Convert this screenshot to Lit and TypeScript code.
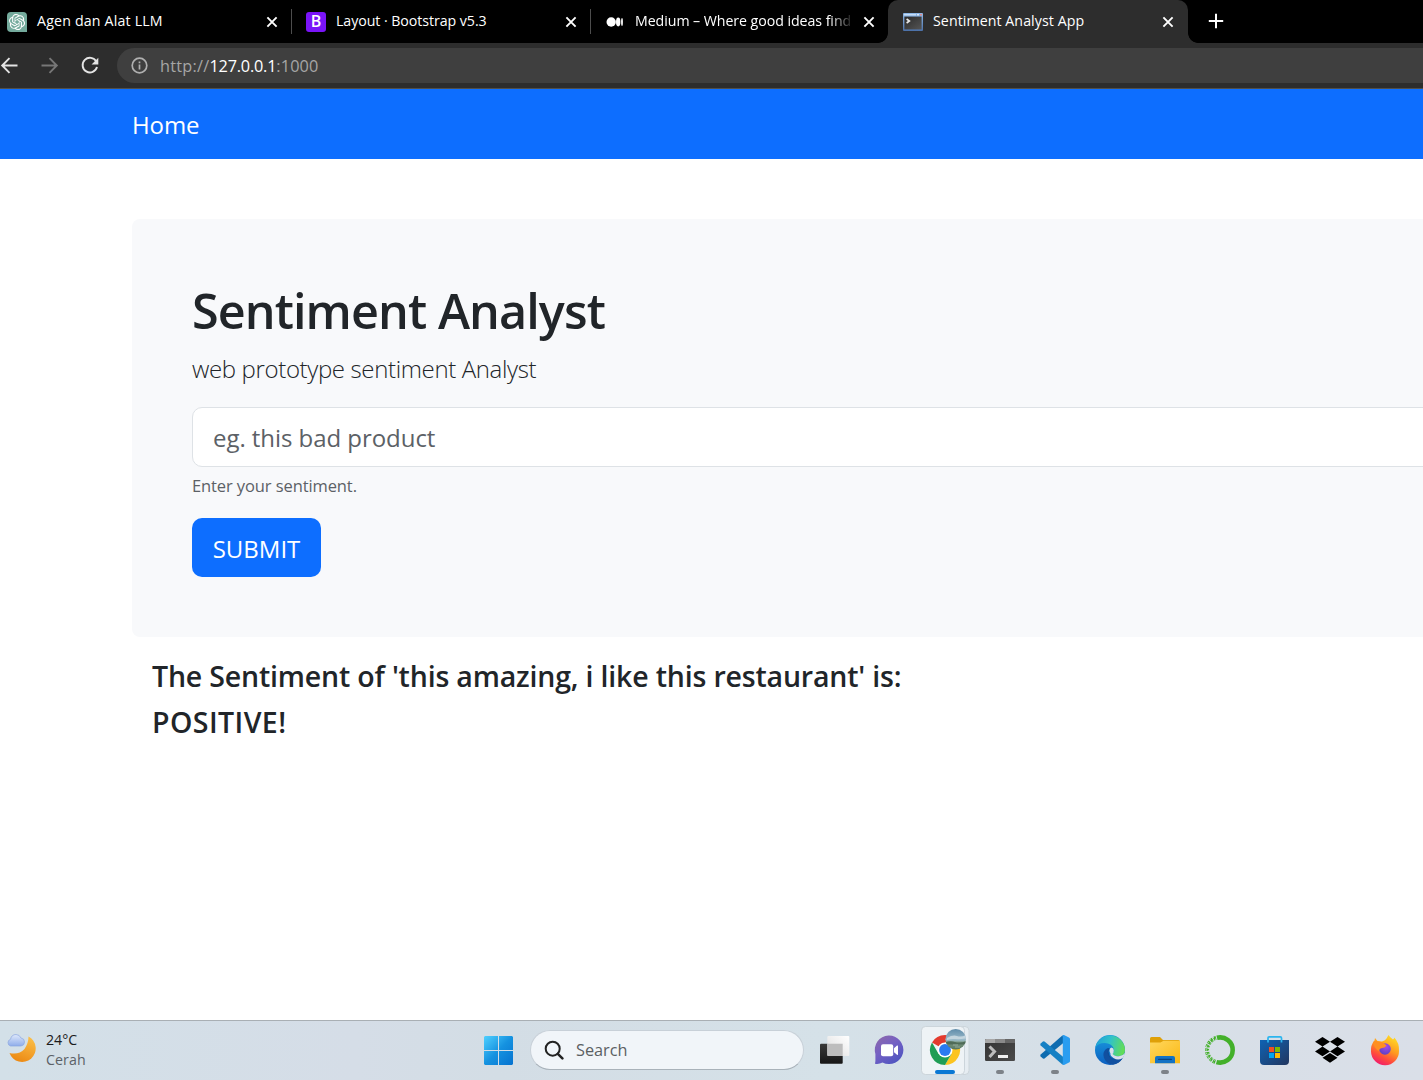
import { LitElement, html, css, svg } from "lit";
import { customElement } from "lit/decorators.js";

const KNOT =
  "M22.2819 9.8211a5.9847 5.9847 0 0 0-.5157-4.9108 6.0462 6.0462 0 0 0-6.5098-2.9A6.0651 6.0651 0 0 0 4.9807 4.1818a5.9847 5.9847 0 0 0-3.9977 2.9 6.0462 6.0462 0 0 0 .7427 7.0966 5.98 5.98 0 0 0 .511 4.9107 6.051 6.051 0 0 0 6.5146 2.9001A5.9847 5.9847 0 0 0 13.2599 24a6.0557 6.0557 0 0 0 5.7718-4.2058 5.9894 5.9894 0 0 0 3.9977-2.9001 6.0557 6.0557 0 0 0-.7475-7.0729zm-9.022 12.6081a4.4755 4.4755 0 0 1-2.8764-1.0408l.1419-.0804 4.7783-2.7582a.7948.7948 0 0 0 .3927-.6813v-6.7369l2.02 1.1686a.071.071 0 0 1 .038.052v5.5826a4.504 4.504 0 0 1-4.4945 4.4944zm-9.6607-4.1254a4.4708 4.4708 0 0 1-.5346-3.0137l.142.0852 4.783 2.7582a.7712.7712 0 0 0 .7806 0l5.8428-3.3685v2.3324a.0804.0804 0 0 1-.0332.0615L9.74 19.9502a4.4992 4.4992 0 0 1-6.1408-1.6464zM2.3408 7.8956a4.485 4.485 0 0 1 2.3655-1.9728V11.6a.7664.7664 0 0 0 .3879.6765l5.8144 3.3543-2.0201 1.1685a.0757.0757 0 0 1-.071 0l-4.8303-2.7865A4.504 4.504 0 0 1 2.3408 7.872zm16.5963 3.8558L13.1038 8.364 15.1192 7.2a.0757.0757 0 0 1 .071 0l4.8303 2.7913a4.4944 4.4944 0 0 1-.6765 8.1042v-5.6772a.79.79 0 0 0-.407-.667zm2.0107-3.0231l-.142-.0852-4.7735-2.7818a.7759.7759 0 0 0-.7854 0L9.409 9.2297V6.8974a.0662.0662 0 0 1 .0284-.0615l4.8303-2.7866a4.4992 4.4992 0 0 1 6.6802 4.66zM8.3065 12.863l-2.02-1.1638a.0804.0804 0 0 1-.038-.0567V6.0742a4.4992 4.4992 0 0 1 7.3757-3.4537l-.142.0805L8.704 5.459a.7948.7948 0 0 0-.3927.6813zm1.0976-2.3654l2.602-1.4998 2.6069 1.4998v2.9994l-2.5974 1.4997-2.6067-1.4997Z";

const favicons = {
  chat: html`<svg class="favicon" viewBox="0 0 20 20">
    <path d="M4 0H16Q20 0 20 4V20H4Q0 20 0 16V4Q0 0 4 0Z" fill="#74aa9c" />
    <path d=${KNOT} fill="#fff" transform="translate(2 2) scale(.67)" />
  </svg>`,
  bootstrap: html`<span class="favicon bs">B</span>`,
  medium: html`<svg class="favicon" viewBox="0 0 20 20">
    <circle cx="6.2" cy="10" r="4.7" fill="#fff" />
    <ellipse cx="13.2" cy="10" rx="2.2" ry="4.4" fill="#fff" />
    <ellipse cx="17" cy="10" rx=".9" ry="4" fill="#fff" />
  </svg>`,
  console: html`<svg class="favicon" viewBox="0 0 20 20">
    <defs>
      <linearGradient id="cb" x1="0" y1="0" x2="0" y2="1">
        <stop offset="0" stop-color="#8fb9e8" /><stop offset="1" stop-color="#4b70a8" />
      </linearGradient>
      <linearGradient id="cs" x1="0" y1="0" x2="1" y2="1">
        <stop offset="0" stop-color="#2a2a2a" /><stop offset="1" stop-color="#555" />
      </linearGradient>
    </defs>
    <rect x="0" y="1" width="20" height="18" rx="1" fill="url(#cb)" />
    <rect x="1" y="2" width="12" height="1.5" fill="#c4dcf6" />
    <rect x="17" y="2" width="2" height="1.5" fill="#e08b8b" />
    <rect x="14" y="2" width="2" height="1.5" fill="#dbe8f7" />
    <rect x="1.4" y="4.6" width="17.2" height="12.8" fill="url(#cs)" />
    <path d="M3.6 7L6.4 9L3.6 11" fill="none" stroke="#e8e8e8" stroke-width="1.6" />
  </svg>`,
};

const closeIcon = html`<svg class="close" viewBox="0 0 12 12">
  <path d="M1.4 1.4L10.6 10.6M10.6 1.4L1.4 10.6" stroke="#fff" stroke-width="1.9" />
</svg>`;

const runDot = svg`<rect x="24" y="49" width="8" height="4" rx="2" fill="#7d8288" />`;

// Each glyph is drawn in a 55x59 taskbar slot.
const apps = [
  svg`<defs>
      <linearGradient id="tv1" x1="0" y1="0" x2="0" y2="1"><stop offset="0" stop-color="#3a3a3a" /><stop offset="1" stop-color="#161616" /></linearGradient>
      <linearGradient id="tv2" x1="1" y1="0" x2="0" y2="1"><stop offset="0" stop-color="#fff" /><stop offset="1" stop-color="#dedede" /></linearGradient>
    </defs>
    <rect x="13" y="22.7" width="22.7" height="20" rx="1" fill="url(#tv1)" />
    <rect x="20.3" y="15" width="22" height="20" rx="1" fill="url(#tv2)" />
    <path d="M20.3 22.7H35.7V35H21.3Q20.3 35 20.3 34Z" fill="#bdbdbd" />`,
  svg`<defs><linearGradient id="tm" x1="0" y1="0" x2=".7" y2="1"><stop offset="0" stop-color="#8f6aa8" /><stop offset=".5" stop-color="#7460c4" /><stop offset="1" stop-color="#4f55c0" /></linearGradient></defs>
    <path d="M13 42.7Q13.6 41 13.4 36L13.4 33A14.3 14.3 0 1 1 20.5 41.5Q17 43.4 13 42.7Z" fill="url(#tm)" />
    <rect x="19" y="23.2" width="12.2" height="12" rx="2" fill="#fff" />
    <path d="M32 27.2L35 24.6Q36 24 36 25.2V33.2Q36 34.4 35 33.8L32 31.2Z" fill="#fff" />`,
  svg`<defs>
      <clipPath id="av"><circle cx="38.7" cy="18.3" r="10.3" /></clipPath>
      <linearGradient id="sky" x1="0" y1="0" x2="0" y2="1"><stop offset="0" stop-color="#5f8caa" /><stop offset=".5" stop-color="#9dbccb" /><stop offset=".6" stop-color="#7d9a86" /><stop offset="1" stop-color="#4d6b52" /></linearGradient>
    </defs>
    <rect x="4.5" y="5.5" width="47.5" height="48" rx="4" fill="#e6edf2" stroke="#ccd5db" />
    <rect x="4.5" y="5.5" width="43" height="48" rx="4" fill="#eef3f6" stroke="#ccd5db" />
    <path d="M28 29L15 21.5A15 15 0 0 1 41 21.5H28Z" fill="#e33b2e" />
    <path d="M28 21.5H41A15 15 0 0 1 28 44L34.5 32.7Z" fill="#fcc41f" />
    <path d="M21.5 32.7L15 21.5A15 15 0 0 0 28 44L34.5 32.7L28 34Z" fill="#1f9d55" />
    <circle cx="28" cy="29" r="7.5" fill="#fff" />
    <circle cx="28" cy="29" r="5.9" fill="#2a7af0" />
    <g clip-path="url(#av)">
      <rect x="28" y="8" width="22" height="22" fill="url(#sky)" />
      <path d="M30 17Q36 13.5 40 15T49 14V17.5Q42 18.5 38 18T30 19Z" fill="#c3d5de" />
      <path d="M28 21.5Q33 19.5 38 21T50 20V23.5H28Z" fill="#4f6b57" />
      <path d="M36 24H41M38 26H43" stroke="#9fb3a2" stroke-width=".8" />
    </g>
    <rect x="18" y="49" width="20" height="4" rx="2" fill="#0a78d4" />`,
  svg`<defs><linearGradient id="tt" x1="0" y1="0" x2="1" y2="1"><stop offset="0" stop-color="#333" /><stop offset="1" stop-color="#4a4a4a" /></linearGradient></defs>
    <rect x="13" y="18" width="30" height="22" rx="1.3" fill="url(#tt)" />
    <path d="M14.3 18H23V22H13V19.3Q13 18 14.3 18Z" fill="#a8a8a8" />
    <rect x="23" y="18" width="10" height="4" fill="#8a8a8a" />
    <path d="M33 18H41.7Q43 18 43 19.3V22H33Z" fill="#666" />
    <path d="M17.5 25.5L22.5 30.5L17.5 36" fill="none" stroke="#bdbdbd" stroke-width="3" />
    <rect x="26" y="34" width="10" height="3" fill="#efefef" />
    ${runDot}`,
  svg`<path d="M35.6 14.2L37.5 21L17.5 37.4Q16.5 38 15.6 37.3L13.7 35.6Q12.8 34.6 13.7 33.6Z" fill="#0e6cb0" />
    <path d="M35.6 43.8L37.5 37L17.5 20.6Q16.5 20 15.6 20.7L13.7 22.4Q12.8 23.4 13.7 24.4Z" fill="#1580c4" />
    <path d="M35.6 14.2Q36.2 13.8 37 14.1L42 16.5Q43 17 43 18V40Q43 41 42 41.5L37 43.9Q36.2 44.2 35.3 43.5Q35.8 43.3 35.8 42V16Q35.8 14.8 35.6 14.2Z" fill="#2a9df0" />
    ${runDot}`,
  svg`<defs>
      <linearGradient id="e1" x1="0" y1=".2" x2="1" y2=".4"><stop offset="0" stop-color="#1f9fd8" /><stop offset=".5" stop-color="#31c2c8" /><stop offset="1" stop-color="#62dd57" /></linearGradient>
      <linearGradient id="e2" x1="0" y1="0" x2="0" y2="1"><stop offset="0" stop-color="#1a9ce0" /><stop offset="1" stop-color="#0c5fc0" /></linearGradient>
    </defs>
    <circle cx="28" cy="29" r="15" fill="url(#e2)" />
    <path d="M13.2 27A15 15 0 0 1 43 29Q43 35 36 35.3Q31.5 35 30.6 33Q32.8 30 31.5 27Q29.5 22.5 23 22Q16 21.8 13.2 27Z" fill="url(#e1)" />
    <path d="M25 27.5Q22 31 24 36Q27 42.5 35 41.2Q38 40.5 40.7 37.2Q39.8 37.5 37 38.2Q30 39 27.5 34.5Q25.8 30.5 27.5 27Z" fill="#0f4d96" />
    <path d="M24 28Q20 31.5 22 37Q24.5 43 31 43.7Q37 43 40.7 37.2Q33 41 27.5 36Q24 32 26.5 27.5Z" fill="#1150a0" />
    <path d="M30.6 33Q27.5 32.5 27.5 29.5Q27.5 27 29.5 26.4Q31.8 26.8 31.8 29.5Q31.7 31.8 30.6 33Q32.5 35.3 37 35.3Q40.5 35.2 43 32Q42.5 35.5 40.5 37.3Q36 40 31.5 37Q28 34.8 28.3 32Z" fill="#d9e0e9" />`,
  svg`<defs><linearGradient id="fo" x1="0" y1="0" x2="1" y2="1"><stop offset="0" stop-color="#ffd75e" /><stop offset="1" stop-color="#fbb914" /></linearGradient></defs>
    <path d="M14.5 16H23L26 19H41.5Q43 19 43 20.5V24H13V17.5Q13 16 14.5 16Z" fill="#dfa008" />
    <path d="M13 21.5H23.5L26.5 19.7H43V42.3H13Z" fill="url(#fo)" />
    <path d="M18 42.3V37Q18 35 20 35H36Q38 35 38 37V42.3Z" fill="#1473c4" />
    <rect x="21" y="37.7" width="14" height="1.4" rx=".7" fill="#0b4580" />
    ${runDot}`,
  svg`<path d="M25 16.8A12.6 12.6 0 1 1 24.5 41.1" fill="none" stroke="#43b02a" stroke-width="4.6" />
    <path d="M24 16.9A12.7 12.7 0 0 0 23.5 41" fill="none" stroke="#43b02a" stroke-width="4" stroke-dasharray="2.6 1" />
    <path d="M22 16.2A14.2 14.2 0 0 0 21.5 41.3" fill="none" stroke="#d9dfe8" stroke-width="1" stroke-dasharray="1.5 2.2" />
    <path d="M24 18A11.8 11.8 0 0 0 24 40" fill="none" stroke="#d9dfe8" stroke-width="1" stroke-dasharray="1.2 1.7" />`,
  svg`<defs><linearGradient id="st" x1="0" y1="0" x2="1" y2="1"><stop offset="0" stop-color="#0f63b4" /><stop offset="1" stop-color="#22365f" /></linearGradient></defs>
    <path d="M13 19H42V40Q42 44 38 44H17Q13 44 13 40Z" fill="url(#st)" />
    <path d="M21 21.5V17Q21 15.8 22.2 15.8H33.3Q34.5 15.8 34.5 17V21.5" fill="none" stroke="#2cb5ee" stroke-width="1.7" />
    <rect x="22" y="26" width="5" height="5" fill="#f25022" /><rect x="28" y="26" width="5" height="5" fill="#7fba00" />
    <rect x="22" y="32" width="5" height="5" fill="#00a4ef" /><rect x="28" y="32" width="5" height="5" fill="#ffb900" />`,
  svg`<path d="M20.5 16L28 20.8L20.5 25.6L13 20.8ZM35.5 16L43 20.8L35.5 25.6L28 20.8ZM20.5 25.6L28 30.4L20.5 35.2L13 30.4ZM35.5 25.6L43 30.4L35.5 35.2L28 30.4ZM28 32L35.5 36.8L28 41.7L20.5 36.8Z" fill="#000" />`,
  svg`<defs>
      <linearGradient id="f1" x1=".8" y1="0" x2=".3" y2="1"><stop offset="0" stop-color="#ffe226" /><stop offset=".45" stop-color="#ff9a1f" /><stop offset=".75" stop-color="#ff4a3d" /><stop offset="1" stop-color="#f0196f" /></linearGradient>
      <radialGradient id="f2" cx=".6" cy=".3" r=".8"><stop offset="0" stop-color="#a34bea" /><stop offset="1" stop-color="#5540c0" /></radialGradient>
    </defs>
    <path d="M31.5 14Q33 16.5 36 18.5Q37.5 17.5 37.3 16.5Q42.5 22 42 30A14 14 0 0 1 14 30.5Q13.5 24 17.5 19.5L18 17L20.5 20L25 20.5Q28.5 19.5 29.5 17.5Z" fill="url(#f1)" />
    <circle cx="28" cy="28" r="5.8" fill="url(#f2)" />
    <path d="M16 21Q18 19.5 21 20.5L26 21.5L29.5 24.5Q28 27 25 27Q22 27.5 22 30Q18 29 16 21Z" fill="#ff8f22" />`,
];

@customElement("app-root")
export class AppRoot extends LitElement {
  static styles = css`
    :host { display: block; width: 1423px; height: 1080px; overflow: hidden; font-family: "Open Sans", "Noto Sans", sans-serif; color: #212529; }
    * { box-sizing: border-box; }
    svg { display: block; flex: none; }
    .screen { display: flex; flex-direction: column; width: 100%; height: 100%; background: #fff; white-space: nowrap; }

    .tabs { display: flex; height: 43px; background: #000; color: #fff; font-size: 14.2px; flex: none; }
    .tab { display: flex; align-items: center; width: 299px; height: 43px; padding: 0 14px; flex: none; position: relative; }
    .tab:first-child { width: 292px; padding-left: 7px; }
    .tab.sep::after { content: ""; position: absolute; right: 0; top: 9px; width: 1px; height: 25px; background: #4d4d4d; }
    .tab:nth-child(3) { width: 297px; padding-right: 13px; }
    .tab.active { width: 300px; padding-left: 15px; background: #2d2d2d; border-radius: 10px 10px 0 0; }
    .tab.active::before, .tab.active::after { content: ""; position: absolute; bottom: 0; width: 10px; height: 10px; }
    .tab.active::before { left: -10px; background: radial-gradient(circle at 0 0, #000 9.5px, #2d2d2d 10.2px); }
    .tab.active::after { right: -10px; background: radial-gradient(circle at 100% 0, #000 9.5px, #2d2d2d 10.2px); }
    .favicon { width: 20px; height: 20px; flex: none; margin-right: 10px; }
    .bs { display: flex; align-items: center; justify-content: center; border-radius: 3px; background: #7a14f8; color: #fff; font-weight: 600; font-size: 16px; line-height: 20px; padding-bottom: 1px; }
    .title { flex: 1; min-width: 0; line-height: 20px; padding-bottom: 2px; }
    .fade { -webkit-mask-image: linear-gradient(90deg, #000 194px, transparent 219px); }
    .t1 { letter-spacing: 0.18px; }
    .t2 { letter-spacing: -0.06px; }
    .t3 { letter-spacing: -0.06px; }
    .t4 { letter-spacing: 0.07px; }
    .close { width: 12px; height: 12px; }
    .plus { width: 16px; height: 16px; margin: 13px 0 0 20px; }

    .toolbar { display: flex; align-items: center; height: 46px; background: #2d2d2d; border-bottom: 1px solid #50504c; flex: none; }
    .nav { width: 117px; height: 44px; }
    .omni { display: flex; align-items: center; flex: 1; height: 35px; padding-left: 14px; border-radius: 18px 0 0 18px; background: #3f3f3f; color: #a6a6a6; font-size: 16.3px; }
    .omni svg { width: 17px; height: 17px; margin-right: 12px; }
    .url { padding-top: 1px; }
    .scheme { letter-spacing: 0.25px; }
    .ip { color: #fff; letter-spacing: -0.22px; }
    .port { letter-spacing: 0.15px; }

    .navbar { height: 70px; background: #0d6eff; color: #fff; padding: 0 132px; font-size: 24px; line-height: 72px; letter-spacing: -0.1px; flex: none; }
    .page { flex: 1; padding: 60px 0 0 132px; overflow: hidden; }
    .card { width: 1650px; height: 418px; padding: 60px; border-radius: 8px; background: #f8f9fb; }
    h1 { margin: 0 0 8px; font-size: 48.5px; line-height: 62px; font-weight: 600; letter-spacing: -0.9px; }
    .lead { margin: 0; height: 38px; font-size: 24px; line-height: 39px; font-weight: 300; letter-spacing: -0.36px; }
    .field { width: 1530px; height: 60px; margin-top: 20px; padding: 0 20px; border: 1px solid #dee2e6; border-radius: 10px; background: #fff; color: #5c6166; font-size: 24px; line-height: 60px; letter-spacing: -0.05px; }
    .help { margin-top: 5px; height: 26px; font-size: 16.5px; line-height: 27px; color: #5c6166; letter-spacing: -0.1px; }
    .submit { display: block; width: 129px; height: 59px; margin: 20px 0 0; padding: 1px 0 0; border: 0; border-radius: 10px; background: #0d6eff; color: #fff; font: 400 24px "Open Sans", sans-serif; }
    .result { margin: 16px 20px 0; font-size: 28.5px; line-height: 46px; font-weight: 600; }
    .statement { letter-spacing: -0.18px; }
    .verdict { letter-spacing: 0.42px; }

    .taskbar { display: flex; align-items: center; height: 60px; border-top: 1px solid #a9afb4; background: linear-gradient(90deg, #d3e0e8, #d5dde7 25%, #d3dde5 35%, #d5e1e8 58%, #d6dfe7 75%, #dadfe8); flex: none; }
    .moon { width: 30px; height: 30px; margin: 0 10px 5px 6px; }
    .weather { width: 438px; padding-bottom: 2px; font-size: 14.2px; line-height: 20px; color: #1b1b1b; }
    .weather div + div { color: #5b6167; letter-spacing: 0.1px; }
    .win { width: 29px; height: 29px; margin: 0 17px 0 0; }
    .search { display: flex; align-items: center; width: 274px; height: 40px; margin: 0 3px 1px 0; padding-left: 13px; border: 1px solid #c8d0d8; border-bottom-color: #a9b2ba; border-radius: 20px; background: #f1f5f9; color: #5b5f63; font-size: 16.3px; }
    .search svg { width: 20px; height: 20px; margin-right: 12px; }
    .app { width: 55px; height: 59px; }
  `;

  render() {
    return html`<div class="screen">
      <div class="tabs">
        <div class="tab sep">${favicons.chat}<span class="title t1">Agen dan Alat LLM</span>${closeIcon}</div>
        <div class="tab sep">${favicons.bootstrap}<span class="title t2">Layout · Bootstrap v5.3</span>${closeIcon}</div>
        <div class="tab">${favicons.medium}<span class="title fade t3">Medium – Where good ideas find</span>${closeIcon}</div>
        <div class="tab active">${favicons.console}<span class="title t4">Sentiment Analyst App</span>${closeIcon}</div>
        <svg class="plus" viewBox="0 0 16 16"><path d="M8 .8V15.2M.8 8H15.2" stroke="#fff" stroke-width="2" /></svg>
      </div>
      <div class="toolbar">
        <svg class="nav" viewBox="0 0 117 44" fill="none" stroke-width="1.9">
          <path d="M17.5 21.5H2.5M9.5 14.2L2.2 21.5L9.5 28.8" stroke="#e4e4e4" />
          <path d="M41.5 21.5H56.5M49.5 14.2L56.8 21.5L49.5 28.8" stroke="#777" />
          <path d="M96.3 17.5A7.3 7.3 0 1 0 97 23" stroke="#e4e4e4" />
          <path d="M98.3 13.8V20.5H91.6Z" fill="#e4e4e4" />
        </svg>
        <div class="omni">
          <svg viewBox="0 0 17 17"><circle cx="8.5" cy="8.5" r="7.3" fill="none" stroke="#b0b0b0" stroke-width="1.7" /><path d="M8.5 7.6V12.4M8.5 4.5V6.2" stroke="#b0b0b0" stroke-width="1.7" /></svg>
          <span class="url"><span class="scheme">http://</span><span class="ip">127.0.0.1</span><span class="port">:1000</span></span>
        </div>
      </div>
      <nav class="navbar">Home</nav>
      <main class="page">
        <section class="card">
          <h1>Sentiment Analyst</h1>
          <p class="lead">web prototype sentiment Analyst</p>
          <div class="field">eg. this bad product</div>
          <div class="help">Enter your sentiment.</div>
          <button class="submit">SUBMIT</button>
        </section>
        <div class="result">
          <div class="statement">The Sentiment of 'this amazing, i like this restaurant' is:</div>
          <div class="verdict">POSITIVE!</div>
        </div>
      </main>
      <footer class="taskbar">
        <svg class="moon" viewBox="0 0 30 30">
          <defs><linearGradient id="mo" x1=".8" y1="0" x2=".4" y2="1"><stop offset="0" stop-color="#fbc04a" /><stop offset="1" stop-color="#ec8a14" /></linearGradient>
          <linearGradient id="cl" x1="0" y1="0" x2="0" y2="1"><stop offset="0" stop-color="#dfe9fb" /><stop offset="1" stop-color="#8fadea" /></linearGradient></defs>
          <path d="M22.5 3.5A13.5 13.5 0 1 1 3.5 20Q13 22 18.5 16Q22.5 10 22.5 3.5Z" fill="url(#mo)" />
          <path d="M4.5 13A3.5 3.5 0 0 1 4.5 6.3Q5.5 1.5 10 1.5Q13.5 1.5 15 5Q18.5 5.5 18.5 9Q18.5 12.5 15 13Z" fill="url(#cl)" stroke="#8ba6df" stroke-width=".7" />
        </svg>
        <div class="weather"><div>24°C</div><div>Cerah</div></div>
        <svg class="win" viewBox="0 0 29 29">
          <defs><linearGradient id="wi" gradientUnits="userSpaceOnUse" x1="0" y1="0" x2="29" y2="29"><stop offset="0" stop-color="#4fd0ff" /><stop offset=".5" stop-color="#1592e0" /><stop offset="1" stop-color="#0672cf" /></linearGradient></defs>
          <path d="M1 0H14V14H0V1ZM15 0H28L29 1V14H15ZM0 15H14V29H1L0 28ZM15 15H29V28L28 29H15Z" fill="url(#wi)" />
        </svg>
        <div class="search">
          <svg viewBox="0 0 20 20" fill="none" stroke="#222"><circle cx="8.7" cy="8.7" r="7" stroke-width="2" /><path d="M13.8 13.8L18.4 18.4" stroke-width="2.5" stroke-linecap="round" /></svg>
          <span>Search</span>
        </div>
        ${apps.map((a) => html`<svg class="app" viewBox="0 0 55 59">${a}</svg>`)}
      </footer>
    </div>`;
  }
}
